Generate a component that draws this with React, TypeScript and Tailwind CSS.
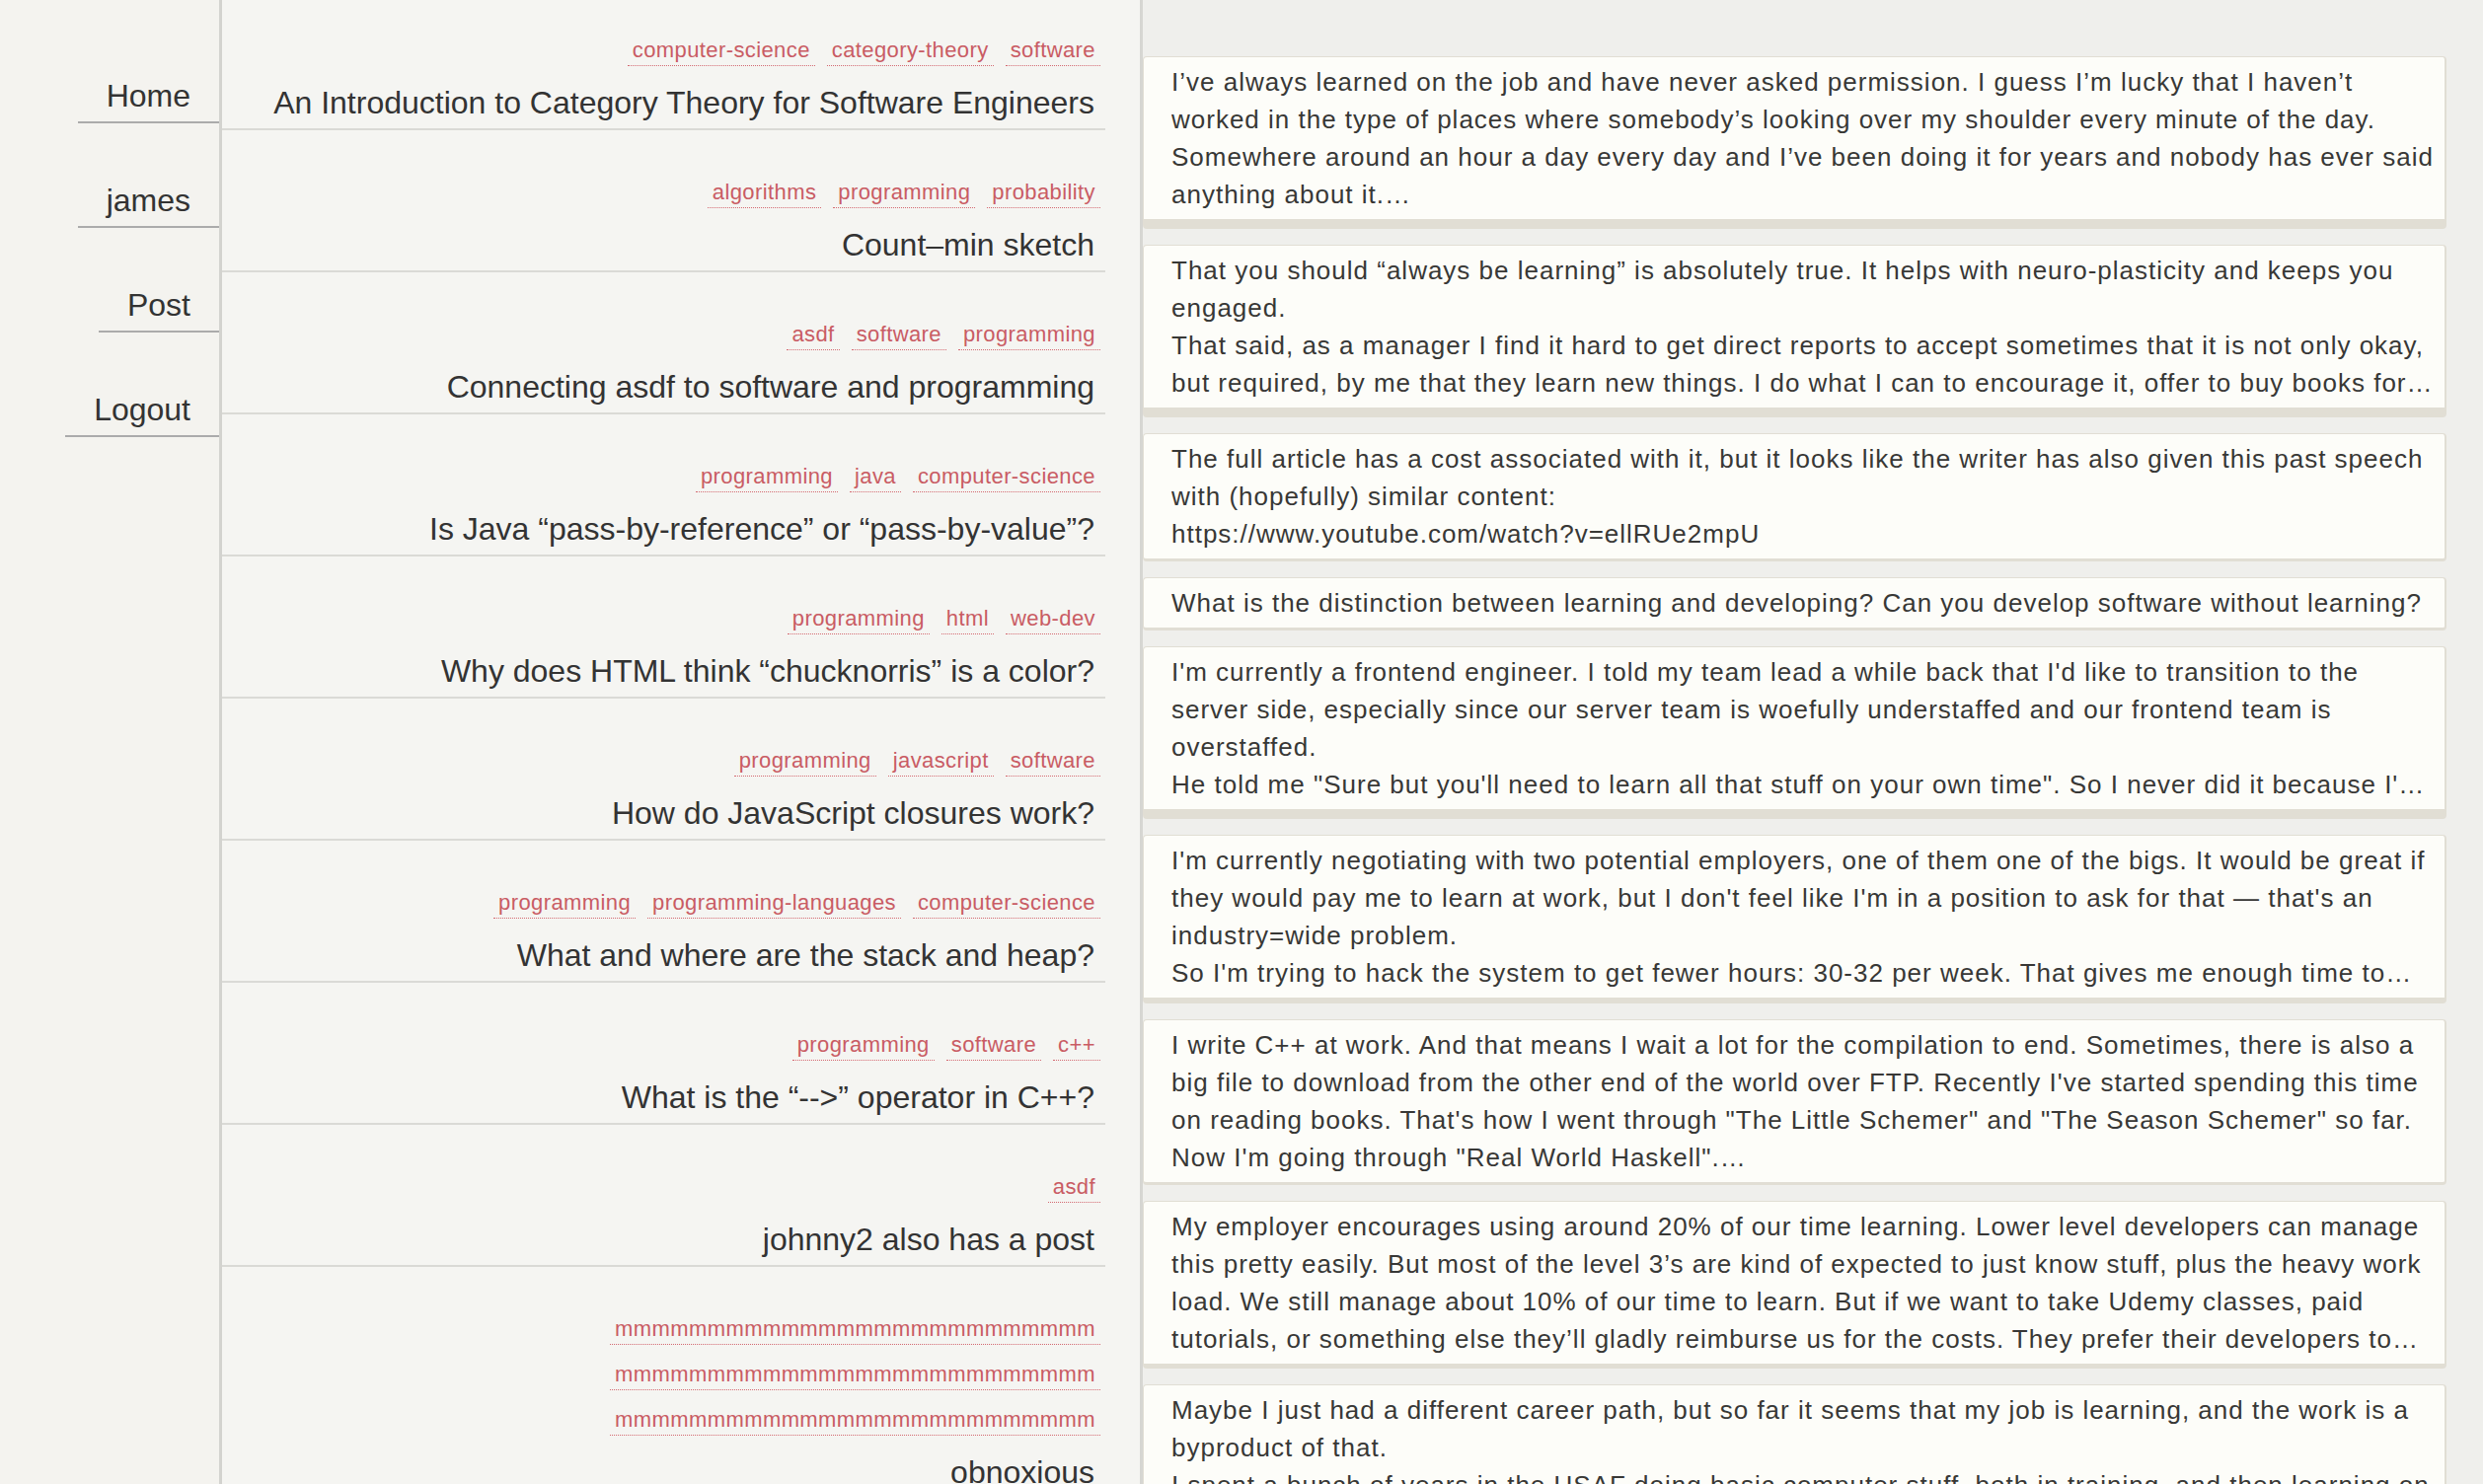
const navLinks = ["Home", "james", "Post", "Logout"];

const posts = [
  { tags: ["computer-science", "category-theory", "software"], title: "An Introduction to Category Theory for Software Engineers" },
  { tags: ["algorithms", "programming", "probability"], title: "Count–min sketch" },
  { tags: ["asdf", "software", "programming"], title: "Connecting asdf to software and programming" },
  { tags: ["programming", "java", "computer-science"], title: "Is Java “pass-by-reference” or “pass-by-value”?" },
  { tags: ["programming", "html", "web-dev"], title: "Why does HTML think “chucknorris” is a color?" },
  { tags: ["programming", "javascript", "software"], title: "How do JavaScript closures work?" },
  { tags: ["programming", "programming-languages", "computer-science"], title: "What and where are the stack and heap?" },
  { tags: ["programming", "software", "c++"], title: "What is the “-->” operator in C++?" },
  { tags: ["asdf"], title: "johnny2 also has a post" },
  {
    tags: [
      "mmmmmmmmmmmmmmmmmmmmmmmmmm",
      "mmmmmmmmmmmmmmmmmmmmmmmmmm",
      "mmmmmmmmmmmmmmmmmmmmmmmmmm",
    ],
    title: "obnoxious",
  },
];

const comments = [
  {
    text: "I’ve always learned on the job and have never asked permission. I guess I’m lucky that I haven’t worked in the type of places where somebody’s looking over my shoulder every minute of the day. Somewhere around an hour a day every day and I’ve been doing it for years and nobody has ever said anything about it.…",
    edge: "border-b-[10px]",
  },
  {
    text: "That you should “always be learning” is absolutely true. It helps with neuro-plasticity and keeps you engaged.\nThat said, as a manager I find it hard to get direct reports to accept sometimes that it is not only okay, but required, by me that they learn new things. I do what I can to encourage it, offer to buy books for them, send them to conferences and give them time in the sprint for it.",
    edge: "border-b-[10px]",
  },
  {
    text: "The full article has a cost associated with it, but it looks like the writer has also given this past speech with (hopefully) similar content:\nhttps://www.youtube.com/watch?v=ellRUe2mpU",
    edge: "border-b-[3px]",
  },
  {
    text: "What is the distinction between learning and developing? Can you develop software without learning?",
    edge: "border-b-[3px]",
  },
  {
    text: "I'm currently a frontend engineer. I told my team lead a while back that I'd like to transition to the server side, especially since our server team is woefully understaffed and our frontend team is overstaffed.\nHe told me \"Sure but you'll need to learn all that stuff on your own time\". So I never did it because I'm not going to spend my evenings on that.",
    edge: "border-b-[10px]",
  },
  {
    text: "I'm currently negotiating with two potential employers, one of them one of the bigs. It would be great if they would pay me to learn at work, but I don't feel like I'm in a position to ask for that — that's an industry=wide problem.\nSo I'm trying to hack the system to get fewer hours: 30-32 per week. That gives me enough time to learn on my own.",
    edge: "border-b-[6px]",
  },
  {
    text: "I write C++ at work. And that means I wait a lot for the compilation to end. Sometimes, there is also a big file to download from the other end of the world over FTP. Recently I've started spending this time on reading books. That's how I went through \"The Little Schemer\" and \"The Season Schemer\" so far. Now I'm going through \"Real World Haskell\".…",
    edge: "border-b-[3px]",
  },
  {
    text: "My employer encourages using around 20% of our time learning. Lower level developers can manage this pretty easily. But most of the level 3’s are kind of expected to just know stuff, plus the heavy work load. We still manage about 10% of our time to learn. But if we want to take Udemy classes, paid tutorials, or something else they’ll gladly reimburse us for the costs. They prefer their developers to “learn on the job”.",
    edge: "border-b-[5px]",
  },
  {
    text: "Maybe I just had a different career path, but so far it seems that my job is learning, and the work is a byproduct of that.\nI spent a bunch of years in the USAF doing basic computer stuff, both in training, and then learning on the job for the rest of it.",
    edge: "border-b-[3px]",
  },
];

export default function App() {
  return (
    <div className="flex h-[1504px] w-full overflow-hidden font-['Liberation_Sans',Arial,sans-serif] text-[#363634]">
      {/* NAV */}
      <nav className="flex w-[225px] shrink-0 flex-col items-end gap-[55px] border-r-[3px] border-[#d3d3cf] bg-[#f4f3ef] pt-[74px]">
        {navLinks.map((l) => (
          <a
            key={l}
            href="#"
            className="border-b-2 border-[#ababab] px-[29px] pb-[6px] pt-[3px] text-[32px] leading-[40px] text-[#333]"
          >
            {l}
          </a>
        ))}
      </nav>

      {/* POSTS */}
      <main className="w-[933px] shrink-0 border-r-[3px] border-[#d6d6d2] bg-[#f5f5f2] pr-[35px]">
        {posts.map((p, i) => (
          <div
            key={i}
            className="flex flex-col items-end border-b-2 border-[#dadad6] pb-[6px] pr-[11px] pt-[48px] first:pt-[36px]"
          >
            <div className="-mr-[6px] flex flex-wrap justify-end gap-x-[12px] gap-y-[15px]">
              {p.tags.map((t, j) => (
                <a
                  key={j}
                  href="#"
                  className="border-b border-dotted border-[#d46a72] px-[5px] text-[22px] leading-[30px] tracking-[0.4px] text-[#c95c64]"
                >
                  {t}
                </a>
              ))}
            </div>
            <h2 className="mt-[17px] text-right text-[32px] leading-[40px] text-[#333]">{p.title}</h2>
          </div>
        ))}
      </main>

      {/* COMMENTS */}
      <aside className="flex min-w-0 flex-1 flex-col gap-[16px] bg-[#efefec] pr-[37px] pt-[57px]">
        {comments.map((c, i) => (
          <div
            key={i}
            className={`shrink-0 rounded-[4px] border border-r-2 border-[#e1ded4] bg-[#fdfdf9] pb-[6px] pl-[28px] pr-[8px] pt-[6px] ${c.edge}`}
          >
            <p className="line-clamp-4 whitespace-pre-line text-[26px] leading-[38px] tracking-[1px] text-[#383836]">{c.text}</p>
          </div>
        ))}
      </aside>
    </div>
  );
}
